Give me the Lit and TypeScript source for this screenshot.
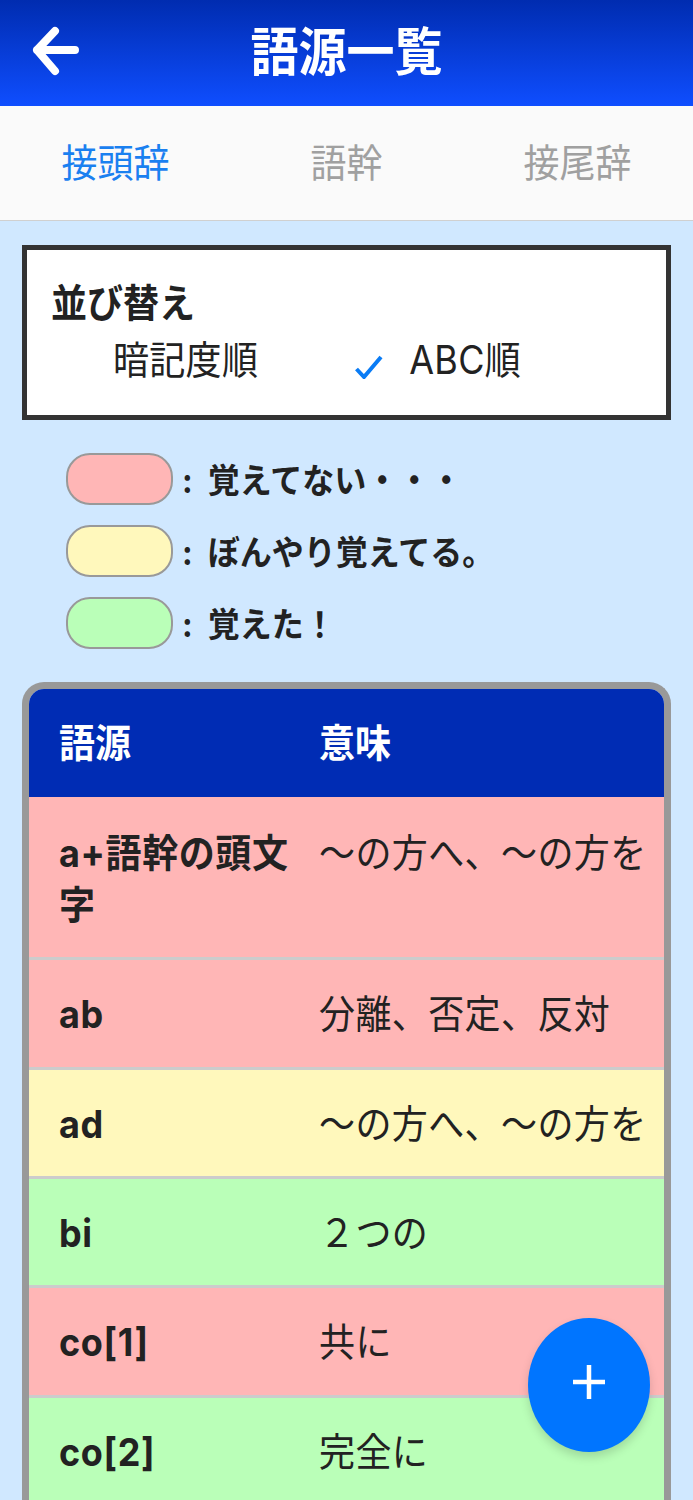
import { LitElement, html, css } from "lit";
import { customElement } from "lit/decorators.js";

const ROWS = [
  { k: "a+語幹の頭文字", m: "〜の方へ、〜の方を", c: "r first", h: 161 },
  { k: "ab", m: "分離、否定、反対", c: "r", h: 108 },
  { k: "ad", m: "〜の方へ、〜の方を", c: "y", h: 107 },
  { k: "bi", m: "２つの", c: "g", h: 107 },
  { k: "co[1]", m: "共に", c: "r", h: 108 },
  { k: "co[2]", m: "完全に", c: "g", h: 108 },
];

@customElement("app-root")
export class AppRoot extends LitElement {
  static styles = css`
    :host {
      display: block;
      position: relative;
      height: 1500px;
      overflow: hidden;
      background: #d0e8ff;
      color: #222;
      font-family: Inter, "Noto Sans CJK JP", sans-serif;
    }
    .tall { display: inline-block; transform: scaleY(1.08); }
    header {
      height: 106px;
      box-sizing: border-box;
      background: linear-gradient(#002cb0, #0f4eff);
      display: flex;
      align-items: center;
      justify-content: center;
      position: relative;
      color: #fff;
      font-size: 48px;
      font-weight: 700;
      line-height: 1;
    }
    .back { position: absolute; left: 31px; top: 25px; }
    .tabs {
      height: 115px;
      box-sizing: border-box;
      background: #fafafa;
      border-bottom: 1px solid #d0d0d0;
      display: grid;
      grid-template-columns: repeat(3, 1fr);
      align-items: center;
      justify-items: center;
      font-size: 36px;
      color: #a0a0a0;
      padding-bottom: 6px;
    }
    .tabs .on { color: #1a80f0; }
    .content { padding: 24px 22px 0; }
    .sort {
      height: 175px;
      box-sizing: border-box;
      border: 5px solid #333;
      background: #fff;
      padding: 28px 24px 0;
    }
    .sort-title { font-size: 36px; font-weight: 700; line-height: 50px; margin-bottom: 4px; }
    .opts {
      display: flex;
      align-items: center;
      font-size: 36px;
      line-height: 56px;
      padding-left: 62px;
      letter-spacing: 0.3px;
    }
    .check { margin-left: 97px; margin-right: 26px; margin-top: 14px; display: block; }
    .legend {
      display: flex;
      flex-direction: column;
      gap: 20px;
      padding: 33px 0 0 44px;
    }
    .leg { display: flex; align-items: center; height: 52px; font-size: 32px; font-weight: 700; line-height: 44px; }
    .sw {
      width: 107px;
      height: 52px;
      box-sizing: border-box;
      border: 2px solid #999;
      border-radius: 24px;
      margin-right: 9px;
      flex: none;
    }
    .lab { padding-top: 4px; white-space: pre; }
    .r { background: #ffb6b6; }
    .y { background: #fff8bc; }
    .g { background: #baffb8; }
    .table {
      margin-top: 33px;
      border: 7px solid #999;
      border-bottom: none;
      border-radius: 22px 22px 0 0;
      overflow: hidden;
      height: 900px;
      box-sizing: border-box;
    }
    .row {
      display: grid;
      grid-template-columns: 260px 1fr;
      box-sizing: border-box;
      padding: 0 0 0 30px;
      font-size: 36px;
      line-height: 48px;
      border-bottom: 3px solid #ccc;
    }
    .head {
      height: 108px;
      background: #002cb4;
      color: #fff;
      font-weight: 700;
      align-items: center;
      border-bottom: none;
    }
    .key { font-weight: 700; padding-top: 30px; width: 240px; letter-spacing: 0.6px; }
    .mean { padding-top: 30px; white-space: nowrap; letter-spacing: 0.4px; }
    .first .key { padding-top: 34px; }
    .first .mean { padding-top: 32px; }
    .fab {
      position: absolute;
      left: 528px;
      top: 1318px;
      width: 122px;
      height: 134px;
      border-radius: 50%;
      background: #0075ff;
      box-shadow: 0 5px 10px rgba(0, 0, 0, 0.15);
      display: flex;
      align-items: center;
      justify-content: center;
    }
    .plus { margin-bottom: 6px; }
  `;

  render() {
    return html`
      <header>
        <svg class="back" width="50" height="52" viewBox="0 0 50 52" fill="none" stroke="#fff" stroke-width="8" stroke-linecap="round" stroke-linejoin="round">
          <path d="M44 25H6M24 6L6 25L24 46" />
        </svg>
        <span class="tall">語源一覧</span>
      </header>
      <div class="tabs">
        <span class="tall on">接頭辞</span>
        <span class="tall">語幹</span>
        <span class="tall">接尾辞</span>
      </div>
      <div class="content">
        <div class="sort">
          <div class="sort-title"><span class="tall">並び替え</span></div>
          <div class="opts">
            <span class="tall">暗記度順</span>
            <svg class="check" width="28" height="24" viewBox="0 0 28 24" fill="none" stroke="#0a7cf5" stroke-width="4">
              <path d="M1.5 14L9 22L26 2" />
            </svg>
            <span class="tall">ABC順</span>
          </div>
        </div>
        <div class="legend">
          <div class="leg"><div class="sw r"></div><span class="tall lab">:  覚えてない・・・</span></div>
          <div class="leg"><div class="sw y"></div><span class="tall lab">:  ぼんやり覚えてる。</span></div>
          <div class="leg"><div class="sw g"></div><span class="tall lab">:  覚えた！</span></div>
        </div>
        <div class="table">
          <div class="row head"><span class="tall">語源</span><span class="tall">意味</span></div>
          ${ROWS.map(
            (r) => html`<div class="row ${r.c}" style="height:${r.h + 2}px">
              <div class="key"><span class="tall">${r.k}</span></div>
              <div class="mean"><span class="tall">${r.m}</span></div>
            </div>`
          )}
        </div>
      </div>
      <div class="fab">
        <svg class="plus" width="36" height="40" viewBox="0 0 36 40" fill="none" stroke="#fff" stroke-width="4.5">
          <path d="M18 3V37M2 20H34" />
        </svg>
      </div>
    `;
  }
}
